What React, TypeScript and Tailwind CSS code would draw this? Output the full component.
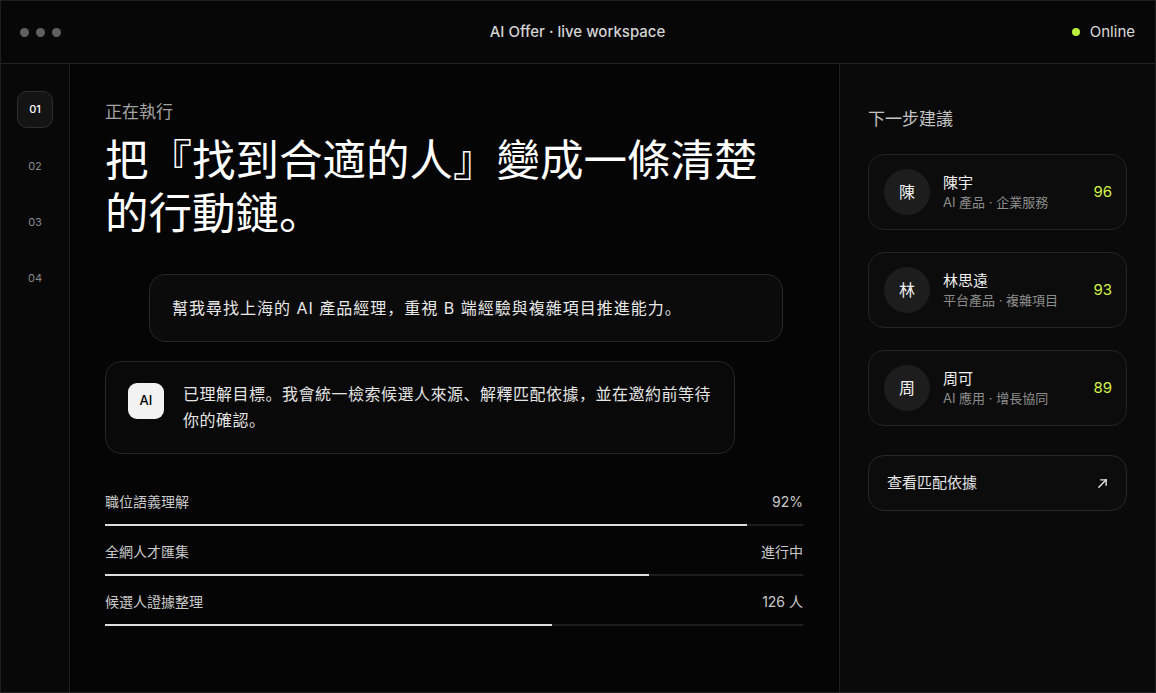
import React from 'react';

const steps = ['01', '02', '03', '04'];

const progress = [
  { label: '職位語義理解', value: '92%', pct: 92 },
  { label: '全網人才匯集', value: '進行中', pct: 78 },
  { label: '候選人證據整理', value: '126 人', pct: 64 },
];

const candidates = [
  { initial: '陳', name: '陳宇', tags: 'AI 產品 · 企業服務', score: 96 },
  { initial: '林', name: '林思遠', tags: '平台產品 · 複雜項目', score: 93 },
  { initial: '周', name: '周可', tags: 'AI 應用 · 增長協同', score: 89 },
];

function Header() {
  return (
    <div className="flex h-[63px] shrink-0 items-center justify-between border-b border-[#222222] bg-[#070707] pl-[19px] pr-[20px]">
      <div className="flex w-[120px] items-center gap-[7px]">
        <span className="h-[9px] w-[9px] rounded-full bg-[#606060]" />
        <span className="h-[9px] w-[9px] rounded-full bg-[#606060]" />
        <span className="h-[9px] w-[9px] rounded-full bg-[#606060]" />
      </div>
      <div className="text-[15px] font-medium text-[#d4d4d4]">AI Offer · live workspace</div>
      <div className="flex w-[120px] items-center justify-end gap-[10px]">
        <span className="h-[8px] w-[8px] rounded-full bg-[#b6ef3f]" />
        <span className="text-[15px] text-[#dcdcdc]">Online</span>
      </div>
    </div>
  );
}

function Rail() {
  return (
    <div className="flex w-[69px] shrink-0 flex-col items-center gap-[20px] border-r border-[#1e1e1e] bg-[#080808] pt-[27px]">
      {steps.map((s, i) => (
        <div
          key={s}
          className={
            i === 0
              ? 'flex h-[37px] w-[36px] items-center justify-center rounded-[10px] border border-[#2e2e2e] bg-[#141414] text-[11px] font-medium text-white'
              : 'flex h-[36px] w-[36px] items-center justify-center text-[11px] text-[#8a8a8a]'
          }
        >
          {s}
        </div>
      ))}
    </div>
  );
}

function Main() {
  return (
    <div className="flex-1 bg-[#050505] pl-[35px] pr-[36px] pt-[36px]">
      <div className="text-[17px] leading-[24px] text-[#a3a3a3]">正在執行</div>
      <h1 className="mt-[10px] w-[690px] text-[43.5px] font-normal leading-[53px] text-white">
        把『找到合適的人』變成一條清楚的行動鏈。
      </h1>

      <div className="ml-[44px] mt-[34px] flex h-[68px] w-[634px] items-center rounded-[16px] border border-[#282828] bg-[#0b0b0b] px-[22px] text-[16px] tracking-[1px] text-[#e8e8e8]">
        幫我尋找上海的&nbsp;AI&nbsp;產品經理，重視&nbsp;B&nbsp;端經驗與複雜項目推進能力。
      </div>

      <div className="mt-[19px] flex w-[630px] items-start gap-[19px] rounded-[16px] border border-[#262626] bg-[#090909] pb-[20px] pl-[22px] pr-[21px] pt-[19px]">
        <div className="mt-[2px] flex h-[36px] w-[36px] shrink-0 items-center justify-center rounded-[9px] bg-[#f2f2f2] text-[13px] font-medium text-black">
          AI
        </div>
        <p className="text-[16px] leading-[26px] tracking-[0.5px] text-[#e4e4e4]">
          已理解目標。我會統一檢索候選人來源、解釋匹配依據，並在邀約前等待你的確認。
        </p>
      </div>

      <div className="mt-[38px] flex flex-col gap-[16px]">
        {progress.map((p) => (
          <div key={p.label}>
            <div className="flex items-center justify-between text-[14px] leading-[20px] text-[#c9c9c9]">
              <span>{p.label}</span>
              <span>{p.value}</span>
            </div>
            <div className="mt-[12px] h-[2px] w-full bg-[#1d1d1d]">
              <div className="h-full bg-[#dcdcdc]" style={{ width: `${p.pct}%` }} />
            </div>
          </div>
        ))}
      </div>
    </div>
  );
}

function Side() {
  return (
    <div className="w-[316px] shrink-0 border-l border-[#1e1e1e] bg-[#0a0a0a] pl-[28px] pr-[28px] pt-[43px]">
      <div className="text-[17px] leading-[24px] text-[#c4c4c4]">下一步建議</div>
      <div className="mt-[23px] flex flex-col gap-[22px]">
        {candidates.map((c) => (
          <div
            key={c.name}
            className="flex h-[76px] items-center rounded-[16px] border border-[#242424] bg-[#0c0c0c] pl-[15px] pr-[14px]"
          >
            <div className="flex h-[46px] w-[46px] shrink-0 items-center justify-center rounded-full bg-[#1d1d1d] text-[16px] text-[#f0f0f0]">
              {c.initial}
            </div>
            <div className="ml-[13px] flex flex-1 flex-col">
              <span className="text-[15px] leading-[21px] text-[#f0f0f0]">{c.name}</span>
              <span className="text-[13px] leading-[19px] text-[#8c8c8c]">{c.tags}</span>
            </div>
            <span className="text-[15px] text-[#d6f246]">{c.score}</span>
          </div>
        ))}
      </div>
      <div className="mt-[29px] flex h-[56px] items-center justify-between rounded-[16px] border border-[#282828] bg-[#0c0c0c] pl-[18px] pr-[18px]">
        <span className="text-[15px] text-[#e6e6e6]">查看匹配依據</span>
        <svg width="11" height="11" viewBox="0 0 12 12" fill="none" stroke="#e6e6e6" strokeWidth="1.5" strokeLinecap="round">
          <path d="M2 10L10 2" />
          <path d="M4 2h6v6" />
        </svg>
      </div>
    </div>
  );
}

export default function App() {
  return (
    <div className="flex h-[693px] w-[1156px] flex-col overflow-hidden border border-[#1f1f1f] bg-black font-[Inter,'Noto_Sans_CJK_SC',sans-serif]">
      <Header />
      <div className="flex flex-1">
        <Rail />
        <Main />
        <Side />
      </div>
    </div>
  );
}
